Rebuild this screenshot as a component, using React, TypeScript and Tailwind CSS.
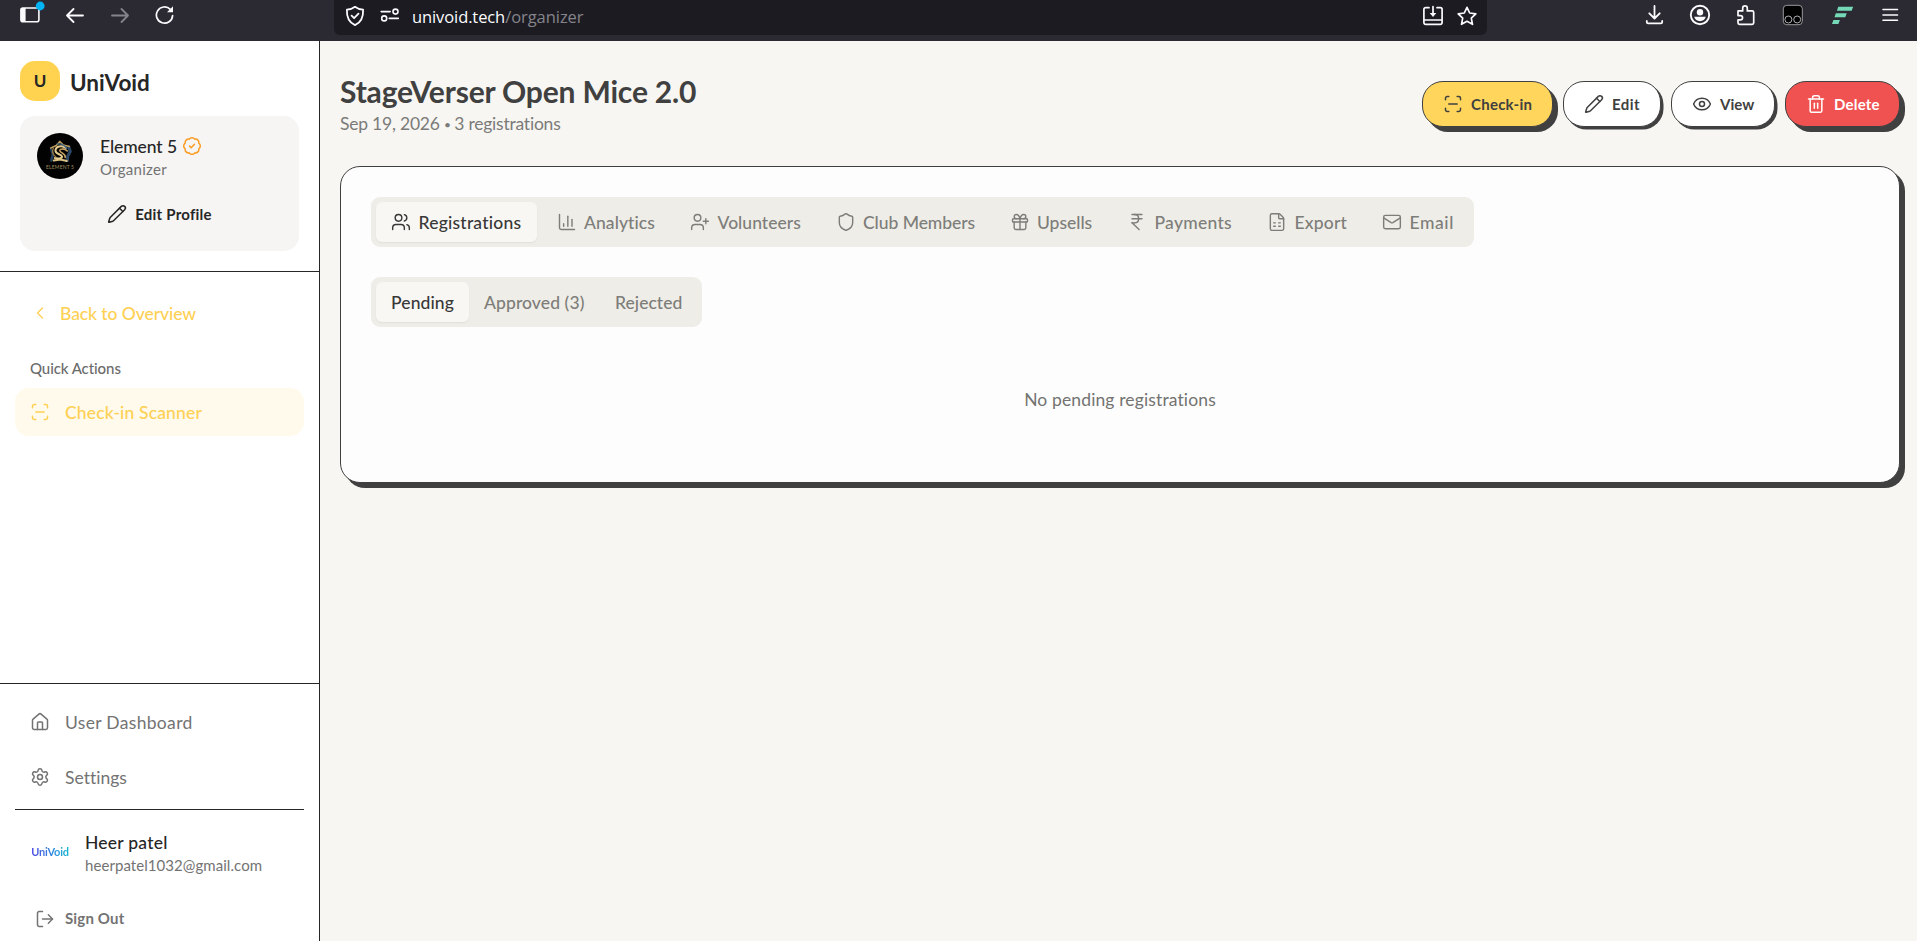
import { useState } from 'react';
import {
  BadgeCheck,
  ChartColumn,
  ChevronLeft,
  Eye,
  FileSpreadsheet,
  Gift,
  House,
  IndianRupee,
  LogOut,
  Mail,
  Pencil,
  ScanLine,
  Settings,
  Shield,
  Trash2,
  UserPlus,
  Users,
} from 'lucide-react';

const tabs = [
  { id: 'registrations', label: 'Registrations', icon: Users, text: 'w-[103px] tracking-[0.22px]' },
  { id: 'analytics', label: 'Analytics', icon: ChartColumn, text: 'w-[71px] tracking-[0.08px]' },
  { id: 'volunteers', label: 'Volunteers', icon: UserPlus, text: 'w-[83px] tracking-[0.03px]' },
  { id: 'club', label: 'Club Members', icon: Shield, text: 'w-[111.5px] tracking-[-0.05px]' },
  { id: 'upsells', label: 'Upsells', icon: Gift, text: 'w-[55px] tracking-[-0.03px]' },
  { id: 'payments', label: 'Payments', icon: IndianRupee, text: 'w-[77.5px] tracking-[0.28px]' },
  { id: 'export', label: 'Export', icon: FileSpreadsheet, text: 'w-[52.5px] tracking-[0.17px]' },
  { id: 'email', label: 'Email', icon: Mail, text: 'w-[44.5px] tracking-[0.6px]' },
];

const statuses = [
  { id: 'pending', label: 'Pending', text: 'w-[63px] tracking-[0.11px]' },
  { id: 'approved', label: 'Approved (3)', text: 'w-[101px] tracking-[0.1px]' },
  { id: 'rejected', label: 'Rejected', text: 'w-[67px] tracking-[0.05px]' },
];

function BrowserBar() {
  return (
    <div className="h-[41px] shrink-0 bg-[#2b2a33] flex items-start text-[#fbfbfe]">
      <svg className="ml-[19px] mt-px shrink-0" width="27" height="24" viewBox="0 0 27 24" fill="none">
        <rect x="1.9" y="7" width="18" height="13.8" rx="2" stroke="currentColor" strokeWidth="1.6" />
        <path d="M2 7h4.6v14H2z" fill="currentColor" />
        <circle cx="21.2" cy="5" r="4.4" fill="#00b3f4" />
      </svg>
      <svg className="ml-5 mt-[6px] shrink-0" width="20" height="20" viewBox="0 0 20 20" fill="none" stroke="currentColor" strokeWidth="1.8" strokeLinecap="round" strokeLinejoin="round">
        <path d="M17 9.5H1M7.500 3L1 9.5 7.500 16" />
      </svg>
      <svg className="ml-[25px] mt-[6px] shrink-0 text-[#85848b]" width="20" height="20" viewBox="0 0 20 20" fill="none" stroke="currentColor" strokeWidth="1.8" strokeLinecap="round" strokeLinejoin="round">
        <path d="M1 9.5h16M10.500 3l6.500 6.500-6.500 6.500" />
      </svg>
      <svg className="ml-[24px] mt-[5px] shrink-0" width="20" height="20" viewBox="0 0 20 20" fill="none" stroke="currentColor" strokeWidth="1.7" strokeLinecap="round">
        <path d="M17.600 10.600A8.100 8.100 0 1 1 15.300 4.400" />
        <path d="M18 1.200v6h-6z" fill="currentColor" stroke="none" />
      </svg>

      <div className="ml-[159px] h-[35px] w-[1153px] shrink-0 bg-[#1c1b22] rounded-b-[6px] flex items-start">
        <svg className="ml-[11px] mt-[5px] shrink-0" width="20" height="22" viewBox="0 0 20 22" fill="none" stroke="currentColor" strokeWidth="1.8" strokeLinecap="round" strokeLinejoin="round">
          <path d="M10 1.800C7.800 3.500 4.800 4.500 1.900 4.700c-.3 6.500 1.600 12.500 8.100 15.400 6.500-2.900 8.400-8.900 8.100-15.400C15.200 4.500 12.200 3.500 10 1.800z" />
          <path d="M6.600 10.700l2.500 2.500 4.400-4.600" />
        </svg>
        <svg className="ml-[15px] mt-[7px] shrink-0" width="20" height="17" viewBox="0 0 20 17" fill="none" stroke="currentColor" strokeWidth="1.600" strokeLinecap="round">
          <circle cx="15.500" cy="4.600" r="2.500" />
          <circle cx="4.200" cy="11.400" r="2.500" />
          <path d="M1.200 4.600h9M9.300 11.400h9" />
        </svg>
        <div className="ml-[12px] mt-[5px] h-6 leading-6 font-['Open_Sans',sans-serif] text-[16.500px] whitespace-nowrap">
          <span className="tracking-[-0.1px]">univoid.tech</span>
          <span className="tracking-[-0.05px] text-[#85848b]">/organizer</span>
        </div>
        <svg className="ml-auto mt-[5px] shrink-0" width="22" height="22" viewBox="0 0 22 22" fill="none" stroke="currentColor" strokeWidth="1.700" strokeLinecap="round" strokeLinejoin="round">
          <path d="M7 2.700H3.600a1.700 1.700 0 0 0-1.700 1.700v13.200a1.700 1.700 0 0 0 1.700 1.700h14.800a1.700 1.700 0 0 0 1.700-1.700V4.400a1.700 1.700 0 0 0-1.700-1.700H15M2 15h18M11 1.500v7" />
          <path d="M7.700 8h6.600L11 11.900z" fill="currentColor" stroke="none" />
        </svg>
        <svg className="ml-[12px] mr-[9px] mt-[5px] shrink-0" width="22" height="22" viewBox="0 0 22 22" fill="none" stroke="currentColor" strokeWidth="1.700" strokeLinejoin="round">
          <path d="M11 2.300l2.700 5.700 6.100.8-4.500 4.300 1.200 6.200L11 16.300l-5.500 3 1.200-6.200L2.200 8.800l6.100-.8z" />
        </svg>
      </div>

      <svg className="ml-[156px] mt-[4px] shrink-0" width="22" height="22" viewBox="0 0 22 22" fill="none" stroke="currentColor" strokeWidth="1.800" strokeLinecap="round" strokeLinejoin="round">
        <path d="M11.500 2v12.200M6.300 9.300l5.200 5.200 5.200-5.200M3.800 17v1a1.300 1.300 0 0 0 1.300 1.300h12.800a1.300 1.300 0 0 0 1.300-1.300v-1" />
      </svg>
      <svg className="ml-[24px] mt-[4px] shrink-0" width="22" height="22" viewBox="0 0 22 22" fill="none" stroke="currentColor" strokeWidth="1.900">
        <circle cx="11" cy="11" r="9.200" />
        <circle cx="11" cy="8.200" r="3.200" fill="currentColor" stroke="none" />
        <path d="M5.200 12.800h11.600c-.6 2.700-3 4.400-5.800 4.400s-5.200-1.700-5.800-4.400z" fill="currentColor" stroke="none" />
      </svg>
      <svg className="ml-[24px] mt-[4px] shrink-0" width="22" height="22" viewBox="0 0 22 22" fill="none" stroke="currentColor" strokeWidth="1.700" strokeLinejoin="round">
        <path d="M3 8.200V6.900h4.700V4.200a2.300 2.300 0 0 1 4.600 0v2.700h4.900a1.500 1.500 0 0 1 1.500 1.500V18.800a1.500 1.500 0 0 1-1.500 1.500H4.500A1.500 1.500 0 0 1 3 18.800v-2.900h2.400a2.100 2.100 0 0 0 0-4.300H3z" />
      </svg>
      <svg className="ml-[25px] mt-[4px] shrink-0" width="22" height="22" viewBox="0 0 22 22" fill="none">
        <rect x="1.300" y="1.300" width="19" height="19.400" rx="3.500" fill="#000" stroke="#a9a9ad" strokeWidth=".9" />
        <circle cx="6.400" cy="15.500" r="3.500" stroke="#c4c4c8" strokeWidth=".9" />
        <circle cx="15.200" cy="15.500" r="3.500" stroke="#c4c4c8" strokeWidth=".9" />
      </svg>
      <svg className="ml-[28px] mt-[5px] shrink-0" width="22" height="21" viewBox="0 0 22 21" fill="#75d9b8">
        <path d="M6.300 1.700h14.800l-1.400 4.100H4.900zM3.800 8.200h10.900l-1.400 4H2.500zM1.400 14.900h6.500l-1.500 4.100H0z" />
      </svg>
      <svg className="ml-[27px] mt-[6px] shrink-0" width="20" height="18" viewBox="0 0 20 18" stroke="currentColor" strokeWidth="1.600" strokeLinecap="round">
        <path d="M2 3.500h14.500M2 9h14.500M2 14.200h14.500" />
      </svg>
    </div>
  );
}

function OrganizerAvatar() {
  return (
    <svg className="shrink-0" width="50" height="50" viewBox="0 0 50 50">
      <circle cx="25" cy="25" r="23" fill="#020202" />
      <g transform="translate(25.300 20.500)" fill="none" strokeLinecap="round" strokeLinejoin="round">
        <path d="M8.500-4.500L10 0 7.500 4.500 7 9" stroke="#2b4866" strokeWidth="3" />
        <path d="M-9-2l1.500 5-1.500 6" stroke="#24405c" strokeWidth="2.600" />
        <path d="M-9.500-3.500L-4-6-.5-10 3-6.500 9-5" stroke="#b89a5c" strokeWidth="1.700" />
        <path d="M-6.500 9L0 8l6.500 1.500" stroke="#d9c084" strokeWidth="2" />
        <path d="M5.500-3.500C1.500-7-5-5-4.800-.6c.1 3.600 6 3 6.500 5.600.2 2-4 2.500-7.200 1.500" stroke="#e4cb8e" strokeWidth="2" />
        <path d="M7-.5C4-3.500-.6-3-.4-.6.200 1.500 5.500 2 5 6" stroke="#c2a263" strokeWidth="1.600" />
        <path d="M-3-7.500C1-8 4-6.500 6.500-3" stroke="#43688a" strokeWidth="1.300" />
        <path d="M-7-3c-1.800 4 0 6.500 2.500 8.500" stroke="#9a7b43" strokeWidth="1.300" />
      </g>
      <text x="25" y="38.200" textAnchor="middle" textLength="28" fontSize="5" fill="#a08b5b" fontFamily="Lato">
        ELEMENT 5
      </text>
    </svg>
  );
}

function Sidebar() {
  return (
    <aside className="w-[320px] shrink-0 bg-white border-r border-[#262626] flex flex-col text-[17.500px]">
      <div className="p-5 border-b border-[#262626]">
        <div className="flex items-center h-10">
          <div className="size-10 rounded-[15px] bg-[#ffd350] flex items-center justify-center font-bold text-[17px] text-[#262626]">U</div>
          <span className="ml-[10px] pt-[3px] text-[22.500px] font-bold tracking-[-0.05px] text-[#262626]">UniVoid</span>
        </div>
        <div className="mt-[15px] h-[135px] p-[15px] rounded-[15px] bg-[#f6f5f3]">
          <div className="flex items-center h-[50px]">
            <OrganizerAvatar />
            <div className="ml-[15px]">
              <div className="h-[24px] flex items-center font-medium tracking-[-0.09px] text-[#262626]">
                <span className="pt-[4px]">Element 5</span>
                <BadgeCheck className="ml-[5px] size-5 text-[#fb9b23]" strokeWidth={1.800} />
              </div>
              <div className="h-[21px] leading-[22px] text-[15px] tracking-[0.29px] text-[#737373]">Organizer</div>
            </div>
          </div>
          <button className="mt-[10px] w-full h-[45px] flex items-center justify-center text-[15px] font-bold tracking-[0.22px] text-[#262626]">
            <Pencil className="mr-[8px] size-5" strokeWidth={1.800} />
            <span className="pt-px">Edit Profile</span>
          </button>
        </div>
      </div>

      <nav className="flex-1 px-[15px] pt-[21px]">
        <a className="h-10 pl-[15px] flex items-center font-medium tracking-[-0.08px] text-[#fed053]">
          <ChevronLeft className="mr-[10px] size-5" strokeWidth={1.600} />
          <span className="pt-[2px]">Back to Overview</span>
        </a>
        <div className="mt-[20px] mb-[5px] h-[30px] pl-[15px] flex items-center text-[15px] font-medium tracking-[-0.08px] text-[#6b6b6b]">
          Quick Actions
        </div>
        <a className="h-[48px] pl-[15px] rounded-[14px] bg-[#fffaeb] flex items-center font-medium tracking-[0.15px] text-[#fed053]">
          <ScanLine className="mr-[15px] size-5" strokeWidth={1.800} />
          <span className="pt-[2px]">Check-in Scanner</span>
        </a>
      </nav>

      <div className="h-[258px] px-[15px] pt-[13px] border-t border-[#262626] text-[#737373]">
        <a className="h-[50px] pl-[15px] flex items-center tracking-[0.32px]">
          <House className="mr-[15px] size-5" strokeWidth={1.800} />
          <span className="pt-[2px]">User Dashboard</span>
        </a>
        <a className="mt-[5px] h-[50px] pl-[15px] flex items-center tracking-[0.02px]">
          <Settings className="mr-[15px] size-5" strokeWidth={1.800} />
          <span className="pt-[2px]">Settings</span>
        </a>
        <div className="mt-[7px] pt-[15px] border-t border-[#262626]">
          <div className="h-[55px] pl-[15px] flex items-center">
            <div className="w-10 h-4 flex items-center justify-center text-[11px] font-bold tracking-[-0.2px]">
              <span className="bg-gradient-to-r from-[#4f46e5] via-[#2f80dc] to-[#14b8d4] bg-clip-text text-transparent">UniVoid</span>
            </div>
            <div className="ml-[15px] pt-[3px]">
              <div className="h-6 leading-6 font-medium tracking-[0.23px] text-[#262626]">Heer patel</div>
              <div className="h-[22px] leading-[21px] text-[15px] tracking-[0.06px]">heerpatel1032@gmail.com</div>
            </div>
          </div>
          <button className="mt-[16px] h-[45px] pl-5 flex items-center text-[15px] font-bold tracking-[0.16px]">
            <LogOut className="mr-[10px] size-5" strokeWidth={1.800} />
            Sign Out
          </button>
        </div>
      </div>
    </aside>
  );
}

function Header() {
  const btn = 'h-[46px] shrink-0 rounded-[21px] border border-[#404040] flex items-center pl-5 text-[15px] font-bold ';
  return (
    <div className="flex items-start justify-between">
      <div className="pt-[30px]">
        <h1 className="h-[40px] leading-[40px] text-[30px] font-bold tracking-[-0.17px] text-[#404040] whitespace-nowrap">
          StageVerser Open Mice 2.0
        </h1>
        <p className="h-[25px] leading-[26px] text-[17.500px] tracking-[-0.22px] text-[#7b7b79] whitespace-nowrap">
          Sep 19, 2026 <span className="inline-block w-[6px] text-center text-[12px] align-[1px]">•</span> 3 registrations
        </p>
      </div>
      <div className="mt-10 flex gap-[10px]">
        <button className={btn + 'w-[131px] bg-[#ffd65b] text-[#404040] tracking-[0.25px] shadow-[5px_5px_0_#404040]'}>
          <ScanLine className="mr-[8px] size-5" strokeWidth={1.800} />
          Check-in
        </button>
        <button className={btn + 'w-[98px] bg-white text-[#404040] tracking-[0.4px] shadow-[2.500px_2.500px_0_#404040]'}>
          <Pencil className="mr-[8px] size-5" strokeWidth={1.800} />
          Edit
        </button>
        <button className={btn + 'w-[104px] bg-white text-[#404040] tracking-[0.05px] shadow-[2.500px_2.500px_0_#404040]'}>
          <Eye className="mr-[8px] size-5" strokeWidth={1.800} />
          View
        </button>
        <button className={btn + 'w-[115px] bg-[#f05252] text-white tracking-[0.2px] shadow-[5px_5px_0_#404040]'}>
          <Trash2 className="mr-[8px] size-5" strokeWidth={1.800} />
          Delete
        </button>
      </div>
    </div>
  );
}

export default function App() {
  const [tab, setTab] = useState('registrations');
  const [status, setStatus] = useState('pending');

  const active = 'bg-[#f8f7f3] text-[#383838] shadow-[0_1px_2px_rgba(0,0,0,0.06)]';
  const idle = 'text-[#7d7d7a]';

  return (
    <div className="h-[941px] w-[1917px] overflow-hidden flex flex-col font-['Lato',sans-serif] bg-[#f7f6f2]">
      <BrowserBar />
      <div className="flex flex-1 min-h-0">
        <Sidebar />
        <main className="flex-1 pl-5 pr-[17px]">
          <Header />
          <section className="mt-[30px] h-[317px] rounded-[20px] border border-[#404040] bg-[#fdfdfd] shadow-[5px_5px_0_#404040] px-[30px] pt-[30px]">
            <div className="flex w-fit h-[50px] p-[5px] gap-[5px] rounded-[9px] bg-[#efede7] text-[17.500px] font-medium">
              {tabs.map((t) => (
                <button
                  key={t.id}
                  onClick={() => setTab(t.id)}
                  className={`h-10 px-[15px] rounded-[6px] flex items-center ${tab === t.id ? active : idle}`}
                >
                  <t.icon className="mr-[7.500px] size-5" strokeWidth={1.700} />
                  <span className={`pt-[2px] whitespace-nowrap text-left ${t.text}`}>{t.label}</span>
                </button>
              ))}
            </div>
            <div className="mt-[30px] flex w-fit h-[50px] p-[5px] rounded-[9px] bg-[#efede7] text-[17.500px] font-medium">
              {statuses.map((s) => (
                <button
                  key={s.id}
                  onClick={() => setStatus(s.id)}
                  className={`h-10 px-[15px] rounded-[6px] flex items-center ${status === s.id ? active : idle}`}
                >
                  <span className={`pt-[2px] whitespace-nowrap text-left ${s.text}`}>{s.label}</span>
                </button>
              ))}
            </div>
            <p className="mt-[60px] h-[25px] leading-[26px] text-center text-[17.500px] tracking-[0.13px] text-[#737371]">
              No pending registrations
            </p>
          </section>
        </main>
      </div>
    </div>
  );
}
